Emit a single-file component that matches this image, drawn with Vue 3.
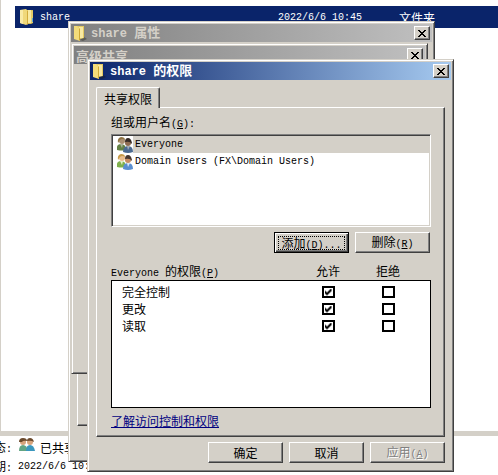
<template>
    <div class="desktop">
        <main class="explorer">
            <div class="file-row">
                <svg class="icon" viewBox="0 0 16 16" aria-hidden="true">
                    <path d="M5 1h8v13l-2 1H5z" fill="#d9bf55" />
                    <path d="M7 1h4v13H7z" fill="#f8e9a2" />
                    <path d="M11 2h2v12h-2z" fill="#e6cc68" />
                    <path d="M0 1l6-1 2 2v13l-2 1-6-2z" fill="#f0d87a" />
                    <path d="M0 1l3 0v14l-3-1z" fill="#f9eaa6" />
                    <path d="M7 1l1 1v13l-1 1z" fill="#d2ac3c" />
                    <path d="M12 9h1v4h-1z" fill="#5aa7d8" />
                </svg>
                <span class="file-name en">share</span>
                <span class="file-date en">2022/6/6 10:45</span>
                <span class="file-type">文件夹</span>
            </div>
        </main>
        <footer class="status">
            <p class="status-line">
                <span>状态<span class="en">: </span></span>
                <svg class="icon people" viewBox="0 0 16 16" aria-hidden="true">
                    <path d="M0 14q0-6 4-6t5 6z" fill="#62a583" />
                    <circle cx="4" cy="5" r="3" fill="#d7a47c" />
                    <path d="M0 5q0-4 4-4t4 3q-4-1-5 1z" fill="#6b4a2c" />
                    <path d="M7 14q0-6 4-6t5 6z" fill="#3b97bd" />
                    <circle cx="11" cy="5" r="3" fill="#d7a47c" />
                    <path d="M8 4q0-3 3-3t4 4q-3-2-7-1z" fill="#6b4a2c" />
                </svg>
                <span>已共享</span>
            </p>
            <p class="status-line">
                <span>日期<span class="en">: </span></span>
                <span class="en">2022/6/6 10:45</span>
            </p>
        </footer>

        <section class="window props-window">
            <header class="title-bar">
                <svg class="icon" viewBox="0 0 16 16" aria-hidden="true">
                    <path d="M7 15l4-3 3 2-4 2z" fill="#5c5c58" />
                    <path d="M4 1h7v12l-4 1H4z" fill="#e5ca61" />
                    <path d="M6 2h4v11H6z" fill="#f8e9a2" />
                    <path d="M1 1h3l3 3v12l-6-2z" fill="#f3dc7a" />
                    <path d="M6 3l1 1v12l-1-1z" fill="#cfa935" />
                </svg>
                <h2><span class="en">share </span>属性</h2>
                <button class="close" aria-label="关闭">
                    <svg viewBox="0 0 8 7" aria-hidden="true"><path :d="closePath" /></svg>
                </button>
            </header>
            <div class="props-panel"></div>
        </section>

        <section class="window advanced-window">
            <header class="title-bar">
                <h2>高级共享</h2>
                <button class="close" aria-label="关闭">
                    <svg viewBox="0 0 8 7" aria-hidden="true"><path :d="closePath" /></svg>
                </button>
            </header>
        </section>

        <section class="window permission-window">
            <header class="title-bar active">
                <svg class="icon" viewBox="0 0 16 16" aria-hidden="true">
                    <path d="M7 15l4-3 3 2-4 2z" fill="#152448" />
                    <path d="M4 1h7v12l-4 1H4z" fill="#e5ca61" />
                    <path d="M6 2h4v11H6z" fill="#f8e9a2" />
                    <path d="M1 1h3l3 3v12l-6-2z" fill="#f3dc7a" />
                    <path d="M6 3l1 1v12l-1-1z" fill="#cfa935" />
                </svg>
                <h2><span class="en">share </span>的权限</h2>
                <button class="close" aria-label="关闭">
                    <svg viewBox="0 0 8 7" aria-hidden="true"><path :d="closePath" /></svg>
                </button>
            </header>

            <div class="window-body">
                <button class="tab" role="tab" aria-selected="true">共享权限</button>
                <div class="panel" role="tabpanel">
                    <div id="users-label" class="label">组或用户名<span class="en">(<u>G</u>):</span></div>
                    <ul class="user-list" role="listbox" aria-labelledby="users-label">
                        <li v-for="user in users" :key="user" role="option" class="user"
                            :class="{ selected: user === selectedUser }" :aria-selected="user === selectedUser"
                            @click="selectedUser = user">
                            <svg class="icon" viewBox="0 0 16 16" aria-hidden="true">
                                <path d="M0 13q-1-6 4-6t5 6q-4 1-9 0z" fill="#7fb04c" />
                                <path d="M3 7h3l-1 4z" fill="#e6efc9" />
                                <circle cx="5" cy="4" r="3" fill="#e9bd8d" />
                                <path d="M1 6q-1-5 3-6 4 0 4 3-3-2-5 0z" fill="#c79a48" />
                                <path d="M6 15q0-6 5-6t5 6q-5 2-10 0z" fill="#5b8fd0" />
                                <path d="M10 9h3l-2 4z" fill="#dbe8f8" />
                                <circle cx="11" cy="6" r="3" fill="#c98e62" />
                                <path d="M8 5q0-4 3-4t4 5l-1 1q0-3-6-2z" fill="#49382f" />
                            </svg>
                            <span class="user-name en">{{ user }}</span>
                        </li>
                    </ul>
                    <div class="actions">
                        <button class="btn default"><span class="focus">添加<span class="en">(<u>D</u>)...</span></span></button>
                        <button class="btn">删除<span class="en">(<u>R</u>)</span></button>
                    </div>

                    <div class="perm-head">
                        <span><span class="en">Everyone </span>的权限<span class="en">(<u>P</u>)</span></span>
                        <span class="center">允许</span>
                        <span class="center">拒绝</span>
                    </div>
                    <div class="perm-box">
                        <table>
                            <tbody>
                                <tr v-for="perm in permissions" :key="perm.name">
                                    <th scope="row">{{ perm.name }}</th>
                                    <td><input v-model="perm.allow" type="checkbox" :aria-label="perm.name + ' 允许'"></td>
                                    <td><input v-model="perm.deny" type="checkbox" :aria-label="perm.name + ' 拒绝'"></td>
                                </tr>
                            </tbody>
                        </table>
                    </div>
                    <a href="#" class="help-link">了解访问控制和权限</a>
                </div>
                <div class="actions footer-actions">
                    <button class="btn">确定</button>
                    <button class="btn">取消</button>
                    <button class="btn" disabled>应用<span class="en">(<u>A</u>)</span></button>
                </div>
            </div>
        </section>
    </div>
</template>

<script setup>
import { ref } from 'vue';

// Stepped cross for the close buttons
const closePath = 'M0 0h2v1h1v1h2v-1h1v-1h2v1h-1v1h-1v1h-1v1h1v1h1v1h1v1h-2v-1h-1v-1h-2v1h-1v1h-2v-1h1v-1h1v-1h1v-1h-1v-1h-1v-1h-1z';

const users = ['Everyone', 'Domain Users (FX\\Domain Users)'];
const selectedUser = ref('Everyone');

const permissions = ref([
    { name: '完全控制', allow: true, deny: false },
    { name: '更改', allow: true, deny: false },
    { name: '读取', allow: true, deny: false }
]);
</script>

<style>
body {
  background-color: #fff;
}
</style>

<style scoped>
.desktop {
  position: relative;
  display: flex;
  flex-direction: column;
  min-height: 100vh;
  overflow: hidden;
  font-family: "Noto Sans CJK SC", sans-serif;
  font-size: 12px;
  line-height: 17px;
  color: #000;
}

.desktop * {
  box-sizing: border-box;
}

button {
  font-family: inherit;
  font-size: 12px;
  line-height: 17px;
  color: #000;
  padding: 0;
}

/* Latin runs are half the width of a CJK character */
.en {
  font-family: "Liberation Mono", monospace;
  font-size: 10px;
  white-space: pre;
}

.icon {
  width: 16px;
  height: 16px;
  flex: none;
}

/* File list behind the dialogs */
.explorer {
  flex: 1;
  padding: 6px 0 0 14px;
  border-left: 1px solid #d4d0c8;
  border-bottom: 5px solid #d4d0c8;
}

.file-row {
  display: grid;
  grid-template-columns: 20px 238px 121px 1fr;
  align-items: center;
  height: 22px;
  padding-left: 5px;
  background-color: #0a246a;
  color: #fff;
}

.status {
  height: 39px;
  margin-left: -18px;
  padding-top: 2px;
}

.status-line {
  display: flex;
  align-items: center;
  height: 19px;
  margin: 0;
}

.people {
  margin: 0 5px 5px 1px;
}

/* Windows */
.window {
  position: absolute;
  background-color: #d4d0c8;
  border: 1px solid;
  border-color: #d4d0c8 #404040 #404040 #d4d0c8;
  box-shadow: inset 1px 1px #fff, inset -1px -1px #808080;
  padding: 2px;
}

.props-window {
  top: 21px;
  bottom: 13px;
  left: 68px;
  right: 63px;
  display: flex;
  flex-direction: column;
}

.advanced-window {
  top: 43px;
  bottom: 101px;
  left: 71px;
  right: 70px;
}

.permission-window {
  top: 59px;
  left: 87px;
  right: 44px;
}

.title-bar {
  display: flex;
  align-items: center;
  gap: 2px;
  height: 18px;
  flex: none;
  padding: 0 2px;
  background: linear-gradient(90deg, #808080, #c0c0c0);
  color: #d4d0c8;
}

.title-bar.active {
  background: linear-gradient(90deg, #0a246a, #a6caf0);
  color: #fff;
}

.title-bar h2 {
  flex: 1;
  margin: 0;
  font-size: 13px;
  font-weight: bold;
}

.title-bar .en {
  font-size: 12px;
}

.close {
  display: flex;
  align-items: center;
  justify-content: center;
  width: 16px;
  height: 14px;
  border: 1px solid;
  border-color: #fff #404040 #404040 #fff;
  box-shadow: inset -1px -1px #808080;
  background-color: #d4d0c8;
}

.close svg {
  width: 8px;
  height: 7px;
  shape-rendering: crispEdges;
}

.props-panel {
  flex: 1;
  margin: 26px 6px 33px;
  border: 1px solid;
  border-color: #fff #404040 #404040 #fff;
  box-shadow: inset -1px -1px #808080;
}

.window-body {
  padding: 7px 6px 6px;
}

/* Tab overlaps the top edge of its panel */
.tab {
  position: relative;
  display: block;
  width: 64px;
  height: 21px;
  margin-bottom: -1px;
  border: 1px solid;
  border-color: #fff #404040 transparent #fff;
  border-bottom: 0;
  border-radius: 2px 2px 0 0;
  box-shadow: inset -1px 0 #808080;
  background-color: #d4d0c8;
}

.panel {
  padding: 5px 13px 7px 14px;
  border: 1px solid;
  border-color: #fff #404040 #404040 #fff;
  box-shadow: inset -1px -1px #808080;
}

.label {
  height: 21px;
}

.user-list {
  height: 93px;
  margin: 0;
  list-style: none;
  background-color: #fff;
  border: 1px solid;
  border-color: #808080 #fff #fff #808080;
  box-shadow: inset 1px 1px #404040, inset -1px -1px #d4d0c8;
  padding: 1px 1px 1px 5px;
}

.user {
  display: flex;
  align-items: center;
  height: 17px;
}

.user-name {
  flex: 1;
  padding-left: 2px;
}

.user.selected .user-name {
  background-color: #d4d0c8;
}

.user.selected .icon {
  filter: brightness(0.75) saturate(0.8);
}

.actions {
  display: flex;
  justify-content: flex-end;
  gap: 6px;
  padding: 5px 1px 0 0;
}

.footer-actions {
  padding-right: 0;
}

.btn {
  width: 75px;
  height: 21px;
  border: 1px solid;
  border-color: #fff #404040 #404040 #fff;
  box-shadow: inset -1px -1px #808080;
  background-color: #d4d0c8;
}

.btn.default {
  border-color: #000;
  box-shadow: inset 1px 1px #fff, inset -1px -1px #404040, inset -2px -2px #808080;
}

.focus {
  display: block;
  margin: 0 3px;
  height: 14px;
  line-height: 12px;
  border: 1px dotted #000;
}

.btn:disabled {
  color: #808080;
  text-shadow: 1px 1px #fff;
}

.perm-head {
  display: grid;
  grid-template-columns: 1fr 60px 60px;
  height: 27px;
  padding: 9px 13px 0 0;
}

.center {
  text-align: center;
}

.perm-box {
  height: 128px;
  padding: 2px 12px 0 10px;
  background-color: #fff;
  border: 1px solid #000;
}

table {
  width: 100%;
  border-collapse: collapse;
  table-layout: fixed;
}

tr {
  height: 17px;
}

th {
  padding: 0;
  font-weight: normal;
  text-align: left;
}

td {
  width: 60px;
  padding: 0;
}

input {
  appearance: none;
  display: block;
  width: 13px;
  height: 12px;
  margin: 0 auto;
  border: 2px solid #000;
  background-color: #fff;
}

input:checked::before {
  content: "";
  display: block;
  width: 7px;
  height: 7px;
  margin: 1px;
  background-color: #000;
  clip-path: polygon(0 2px, 1px 2px, 1px 3px, 2px 3px, 2px 4px, 3px 4px, 3px 3px, 4px 3px, 4px 2px, 5px 2px, 5px 1px, 6px 1px, 6px 0, 7px 0, 7px 3px, 6px 3px, 6px 4px, 5px 4px, 5px 5px, 4px 5px, 4px 6px, 3px 6px, 3px 7px, 2px 7px, 2px 6px, 1px 6px, 1px 5px, 0 5px);
}

.help-link {
  display: block;
  width: fit-content;
  margin-top: 4px;
  color: #000080;
}
</style>
